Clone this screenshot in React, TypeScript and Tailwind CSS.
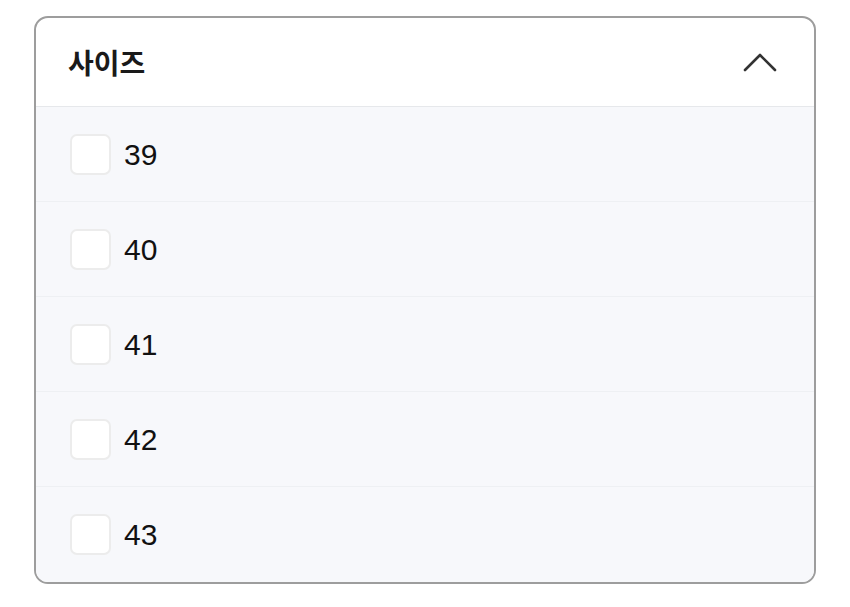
import React from 'react';

const SIZES = ['39', '40', '41', '42', '43'];

const SizeFilter: React.FC = () => {
  return (
    <div className="mx-[34px] w-[782px] overflow-hidden rounded-[14px] border-2 border-[#9d9d9d] bg-white">
      <div className="flex h-[89px] items-center justify-between border-b border-[#e6e8eb] pl-[32px] pr-[37px]">
        <h3
          className="text-[28px] font-bold text-[#1a1a1a]"
          style={{ fontFamily: '"Noto Sans CJK KR", "Noto Sans", sans-serif' }}
        >
          사이즈
        </h3>
        <svg width="34" height="22" viewBox="0 0 34 22" fill="none">
          <polyline points="2,19 17,4 32,19" stroke="#333333" strokeWidth="2.6" strokeLinecap="round" strokeLinejoin="round" />
        </svg>
      </div>
      <div className="bg-[#f7f8fb]">
        {SIZES.map((size, i) => (
          <label
            key={size}
            className={`flex h-[95px] items-center gap-[13px] pl-[34px] ${i < SIZES.length - 1 ? 'border-b border-[#eef0f3]' : ''}`}
          >
            <span className="h-[41px] w-[41px] rounded-[7px] border-2 border-[#ececec] bg-white"></span>
            <span
              className="text-[30px] text-[#111111]"
              style={{ fontFamily: '"Liberation Sans", Arial, sans-serif' }}
            >
              {size}
            </span>
          </label>
        ))}
      </div>
    </div>
  );
};

export default function App() {
  return (
    <div className="h-[607px] w-[850px] bg-white pt-[16px]">
      <SizeFilter />
    </div>
  );
}
